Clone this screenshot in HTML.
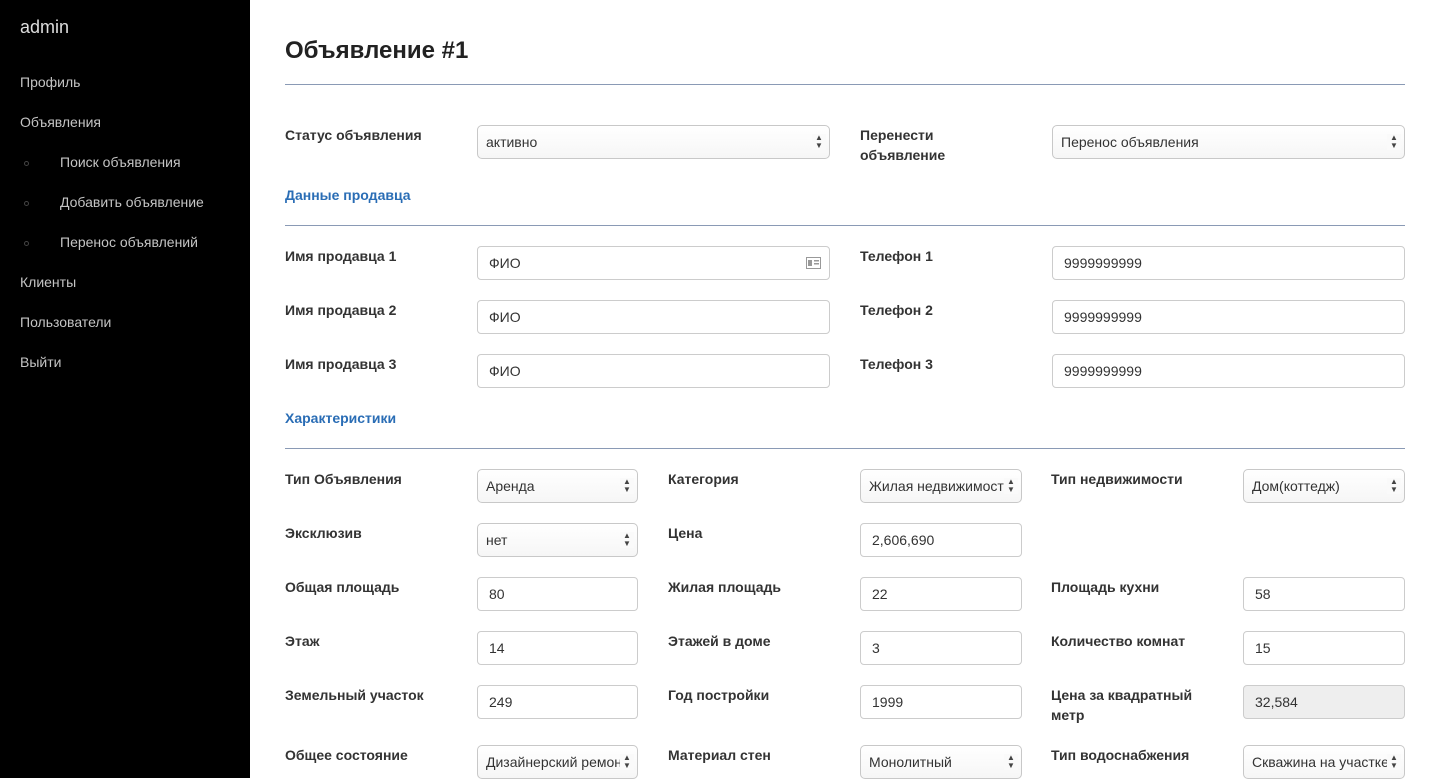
<!DOCTYPE html>
<html><head><meta charset="utf-8">
<style>
*{box-sizing:border-box;margin:0;padding:0}
body{width:1440px;height:778px;overflow:hidden;background:#fff;font-family:"Liberation Sans","Noto Sans CJK SC",sans-serif;font-size:14px;color:#333;position:relative}
#side{position:absolute;left:0;top:0;width:250px;height:778px;background:#000}
#side div{position:absolute;color:#c4c4c4;font-size:14px}
.dot{position:absolute;width:5px;height:5px;border:1px solid #444;border-radius:50%}
.a{position:absolute}
.lbl{position:absolute;font-weight:bold;font-size:14px;line-height:20px;color:#333}
.in{position:absolute;height:34px;border:1px solid #ccc;border-radius:4px;background:#fff;padding:0 11px;line-height:32px;font-size:14px;color:#333;white-space:nowrap;overflow:hidden}
.sel{background:linear-gradient(#fff,#f6f6f6);padding:0 22px 0 8px;border-color:#c8c8c8;border-radius:5px}
.sel:after{content:"▲\A▼";white-space:pre;position:absolute;right:3px;top:8px;width:14px;text-align:center;font-size:8px;line-height:8px;color:#444;background:#fafafa;height:16px}
.dis{background:#eee}
.hr{position:absolute;left:285px;width:1120px;height:1px;background:#8a9ab5}
.sec{position:absolute;left:285px;color:#2a6db5;font-weight:bold;font-size:14px}
</style></head><body>
<div id="side">
<div style="left:20px;top:17px;font-size:18px;color:#ddd">admin</div>
<div style="left:20px;top:74px">Профиль</div>
<div style="left:20px;top:114px">Объявления</div>
<span class="dot" style="left:24px;top:161px"></span><div style="left:60px;top:154px">Поиск объявления</div>
<span class="dot" style="left:24px;top:201px"></span><div style="left:60px;top:194px">Добавить объявление</div>
<span class="dot" style="left:24px;top:241px"></span><div style="left:60px;top:234px">Перенос объявлений</div>
<div style="left:20px;top:274px">Клиенты</div>
<div style="left:20px;top:314px">Пользователи</div>
<div style="left:20px;top:354px">Выйти</div>
</div>
<div class="a" style="left:285px;top:37px;font-size:24px;font-weight:bold;color:#222">Объявление #1</div>
<div class="hr" style="top:84px"></div>

<div class="lbl" style="left:285px;top:125px">Статус объявления</div>
<div class="in sel" style="left:477px;top:125px;width:353px">активно</div>
<div class="lbl" style="left:860px;top:125px">Перенести<br>объявление</div>
<div class="in sel" style="left:1052px;top:125px;width:353px">Перенос объявления</div>

<div class="sec" style="top:187px">Данные продавца</div>
<div class="hr" style="top:225px"></div>

<div class="lbl" style="left:285px;top:246px">Имя продавца 1</div>
<div class="in" style="left:477px;top:246px;width:353px">ФИО<svg style="position:absolute;right:8px;top:10px" width="15" height="12" viewBox="0 0 15 12"><rect x="0.5" y="0.5" width="14" height="11" fill="none" stroke="#999"/><rect x="2" y="3" width="4" height="6" fill="#999"/><rect x="8" y="3" width="5" height="1.5" fill="#999"/><rect x="8" y="6" width="5" height="1.5" fill="#999"/></svg></div>
<div class="lbl" style="left:860px;top:246px">Телефон 1</div>
<div class="in" style="left:1052px;top:246px;width:353px">9999999999</div>
<div class="lbl" style="left:285px;top:300px">Имя продавца 2</div>
<div class="in" style="left:477px;top:300px;width:353px">ФИО</div>
<div class="lbl" style="left:860px;top:300px">Телефон 2</div>
<div class="in" style="left:1052px;top:300px;width:353px">9999999999</div>
<div class="lbl" style="left:285px;top:354px">Имя продавца 3</div>
<div class="in" style="left:477px;top:354px;width:353px">ФИО</div>
<div class="lbl" style="left:860px;top:354px">Телефон 3</div>
<div class="in" style="left:1052px;top:354px;width:353px">9999999999</div>

<div class="sec" style="top:410px">Характеристики</div>
<div class="hr" style="top:448px"></div>

<div class="lbl" style="left:285px;top:469px">Тип Объявления</div>
<div class="in sel" style="left:477px;top:469px;width:161px">Аренда</div>
<div class="lbl" style="left:668px;top:469px">Категория</div>
<div class="in sel" style="left:860px;top:469px;width:162px">Жилая недвижимость</div>
<div class="lbl" style="left:1051px;top:469px">Тип недвижимости</div>
<div class="in sel" style="left:1243px;top:469px;width:162px">Дом(коттедж)</div>

<div class="lbl" style="left:285px;top:523px">Эксклюзив</div>
<div class="in sel" style="left:477px;top:523px;width:161px">нет</div>
<div class="lbl" style="left:668px;top:523px">Цена</div>
<div class="in" style="left:860px;top:523px;width:162px">2,606,690</div>

<div class="lbl" style="left:285px;top:577px">Общая площадь</div>
<div class="in" style="left:477px;top:577px;width:161px">80</div>
<div class="lbl" style="left:668px;top:577px">Жилая площадь</div>
<div class="in" style="left:860px;top:577px;width:162px">22</div>
<div class="lbl" style="left:1051px;top:577px">Площадь кухни</div>
<div class="in" style="left:1243px;top:577px;width:162px">58</div>

<div class="lbl" style="left:285px;top:631px">Этаж</div>
<div class="in" style="left:477px;top:631px;width:161px">14</div>
<div class="lbl" style="left:668px;top:631px">Этажей в доме</div>
<div class="in" style="left:860px;top:631px;width:162px">3</div>
<div class="lbl" style="left:1051px;top:631px">Количество комнат</div>
<div class="in" style="left:1243px;top:631px;width:162px">15</div>

<div class="lbl" style="left:285px;top:685px">Земельный участок</div>
<div class="in" style="left:477px;top:685px;width:161px">249</div>
<div class="lbl" style="left:668px;top:685px">Год постройки</div>
<div class="in" style="left:860px;top:685px;width:162px">1999</div>
<div class="lbl" style="left:1051px;top:685px">Цена за квадратный<br>метр</div>
<div class="in dis" style="left:1243px;top:685px;width:162px">32,584</div>

<div class="lbl" style="left:285px;top:745px">Общее состояние</div>
<div class="in sel" style="left:477px;top:745px;width:161px">Дизайнерский ремонт</div>
<div class="lbl" style="left:668px;top:745px">Материал стен</div>
<div class="in sel" style="left:860px;top:745px;width:162px">Монолитный</div>
<div class="lbl" style="left:1051px;top:745px">Тип водоснабжения</div>
<div class="in sel" style="left:1243px;top:745px;width:162px">Скважина на участке</div>
</body></html>
